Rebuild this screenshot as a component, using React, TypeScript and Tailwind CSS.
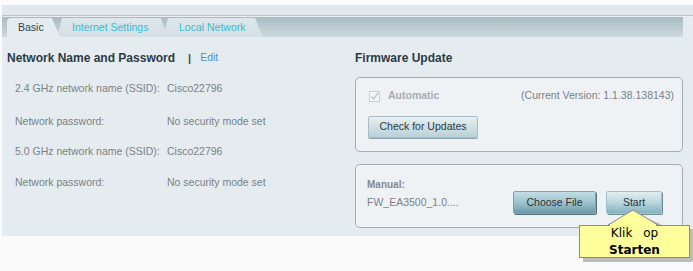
import React from "react";

const F = { fontFamily: '"Liberation Sans", Arial, sans-serif' };

function Row({ label, value }: { label: string; value: string }) {
  return (
    <div className="flex h-[14px] items-center text-[10.5px] text-[#7b8084] whitespace-nowrap">
      <div className="w-[160px] shrink-0 pl-[8px]">{label}</div>
      <div>{value}</div>
    </div>
  );
}

export default function App() {
  return (
    <div className="relative w-[693px] h-[271px] bg-[#fafafa] overflow-hidden" style={F}>
      <div className="h-[5px] bg-[#fbfbfb]" />
      <div className="ml-[2px] h-[10px] bg-[#e0e8ed]" />
      <div className="ml-[2px] h-[1px] bg-[#b9c2c7]" />
      <div className="ml-[2px] h-[1px] bg-[#e8eef1]" />
      {/* tab bar */}
      <div className="ml-[2px] bg-[#e5ecf0]">
        <div className="w-[681px] h-[20px] bg-gradient-to-b from-[#a8bbc2] to-[#cddadf] flex items-end pl-[5px]">
          <div className="relative z-10 w-[53px] h-[19px] bg-[#e5ecf0] rounded-tl-[4px] [clip-path:polygon(0_0,calc(100%_-_8px)_0,100%_100%,0_100%)] flex items-center pl-[11px] text-[10.5px] text-[#3a3f44]">
            Basic
          </div>
          <div className="relative z-[5] -ml-[3px] w-[110px] h-[19px] bg-gradient-to-b from-[#dde7eb] to-[#d4e0e5] [clip-path:polygon(0_100%,5px_0,calc(100%_-_6px)_0,100%_100%)] flex items-center pl-[15px] text-[10.5px] text-[#38bccf]">
            Internet Settings
          </div>
          <div className="relative -ml-[4px] w-[100px] h-[19px] bg-gradient-to-b from-[#dde7eb] to-[#d4e0e5] [clip-path:polygon(0_100%,5px_0,calc(100%_-_8px)_0,100%_100%)] flex items-center pl-[16px] text-[10.5px] text-[#38bccf]">
            Local Network
          </div>
        </div>
      </div>
      {/* content */}
      <div className="ml-[2px] h-[199px] bg-[#e5ecf0] flex">
        <div className="w-[348px] pl-[5px] pt-[14px]">
          <div className="flex items-center h-[14px] text-[12px] whitespace-nowrap">
            <span className="font-bold text-[#2c3a45]">Network Name and Password</span>
            <span className="ml-[13px] font-bold text-[#3d4a55] text-[11px]">|</span>
            <span className="ml-[9px] text-[10.5px] text-[#4a90cf]">Edit</span>
          </div>
          <div className="mt-[17px] flex flex-col">
            <Row label="2.4 GHz network name (SSID):" value="Cisco22796" />
            <div className="h-[19px]" />
            <Row label="Network password:" value="No security mode set" />
            <div className="h-[16px]" />
            <Row label="5.0 GHz network name (SSID):" value="Cisco22796" />
            <div className="h-[17px]" />
            <Row label="Network password:" value="No security mode set" />
          </div>
        </div>
        <div className="w-[328px] ml-[5px] pt-[14px]">
          <div className="h-[14px] flex items-center text-[12px] font-bold text-[#2c3a45]">Firmware Update</div>
          <div className="mt-[12px] h-[75px] rounded-[5px] border border-[#a3adb3] bg-[#eef2f5] pl-[12px] pr-[8px] pt-[11px]">
            <div className="flex items-center h-[14px]">
              <svg width="11" height="11" viewBox="0 0 11 11" className="ml-[1px]">
                <rect x="0.5" y="0.5" width="10" height="10" fill="#f3f6f8" stroke="#c5cfd4" />
                <path d="M2.5 5.5 L4.5 8 L9.5 1.5" fill="none" stroke="#b9cad2" strokeWidth="1.4" />
              </svg>
              <span className="ml-[8px] text-[10.5px] font-bold text-[#a9adb0]">Automatic</span>
              <span className="ml-auto text-[10.5px] text-[#7b8084]">(Current Version: 1.1.38.138143)</span>
            </div>
            <button className="mt-[13px] w-[110px] h-[22px] rounded-[2px] border border-[#a9bcc4] bg-gradient-to-b from-[#e6f0f3] to-[#b9d0d8] shadow-[0_1px_0_#8ea5ad] text-[10.5px] text-[#2e3a40]">
              Check for Updates
            </button>
          </div>
          <div className="mt-[12px] h-[64px] rounded-[5px] border border-[#a3adb3] bg-[#eef2f5] pl-[11px] pr-[20px] pt-[12px] flex">
            <div className="flex flex-col">
              <div className="h-[14px] flex items-center text-[10px] font-bold text-[#858a8e]">Manual:</div>
              <div className="mt-[5px] h-[14px] flex items-center text-[10.5px] text-[#7b8084]">FW_EA3500_1.0....</div>
            </div>
            <button className="ml-auto mt-[14px] w-[83px] h-[23px] rounded-[2px] border border-[#7fa3ae] bg-gradient-to-b from-[#c3dde4] via-[#9fc4ce] to-[#6d9ba8] shadow-[1px_1px_0_#56737c] text-[10.5px] text-[#2a3439]">
              Choose File
            </button>
            <button className="ml-[10px] mt-[14px] w-[56px] h-[23px] rounded-[2px] border border-[#a3c1ca] bg-gradient-to-b from-[#e1eef2] via-[#b9d6de] to-[#86b3bf] shadow-[1px_1px_0_#6f8e97] text-[10.5px] text-[#2a3439]">
              Start
            </button>
          </div>
        </div>
      </div>
      {/* callout */}
      <svg className="absolute left-[604px] top-[208px]" width="62" height="20" viewBox="0 0 62 20">
        <polygon points="32,5 60,18 9,18" fill="#b5b5b5" />
        <polygon points="29,2 54,17 4,17" fill="#ffff9c" stroke="#8a8a8a" strokeWidth="1" />
      </svg>
      <div className="absolute left-[583px] top-[229px] w-[111px] h-[33px] bg-[#bdbdbd]" />
      <div
        className="absolute left-[579px] top-[225px] w-[111px] h-[33px] bg-[#ffff9c] border border-[#8a8a8a] flex flex-col items-center justify-center leading-[17px] text-[12px] text-black"
        style={{ fontFamily: '"DejaVu Sans", Verdana, sans-serif' }}
      >
        <div className="[word-spacing:7px]">Klik op</div>
        <div className="font-bold">Starten</div>
      </div>
      <div className="absolute left-[610px] top-[224px] w-[46px] h-[2px] bg-[#ffff9c]" />
    </div>
  );
}
